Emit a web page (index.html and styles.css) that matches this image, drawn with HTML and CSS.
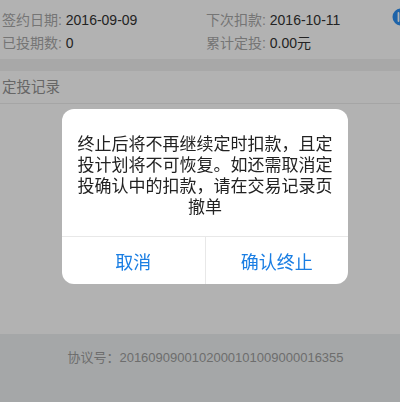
FILE: index.html
```html
<!DOCTYPE html>
<html>
<head>
  <meta charset="utf-8">
  <title>定投详情</title>
  <link rel="stylesheet" href="styles.css">
</head>
<body>
  <div class="page">
    <div class="info">
      <div class="info-row">
        <span class="cell"><span class="label">签约日期: </span><span class="value">2016-09-09</span></span>
        <span class="cell"><span class="label">下次扣款: </span><span class="value">2016-10-11</span></span>
        <svg class="help-icon" width="18" height="18" viewBox="0 0 18 18">
          <circle cx="9" cy="9" r="8.5" fill="#2a8ff2"/>
          <rect x="5.6" y="4" width="1.8" height="10" rx="0.9" fill="#fff"/>
        </svg>
      </div>
      <div class="info-row">
        <span class="cell"><span class="label">已投期数: </span><span class="value">0</span></span>
        <span class="cell"><span class="label">累计定投: </span><span class="value">0.00元</span></span>
      </div>
    </div>
    <div class="gap"></div>
    <div class="section-title">定投记录</div>
    <div class="records"></div>
    <div class="footer">协议号：2016090900102000101009000016355</div>
  </div>

  <div class="mask">
    <div class="dialog">
      <div class="dialog-text">终止后将不再继续定时扣款，且定投计划将不可恢复。如还需取消定投确认中的扣款，请在交易记录页撤单</div>
      <div class="dialog-buttons">
        <button class="btn">取消</button>
        <button class="btn">确认终止</button>
      </div>
    </div>
  </div>
</body>
</html>
```

FILE: styles.css
```css
html, body {
  margin: 0;
  height: 100%;
  overflow: hidden;
}
body {
  background-color: #fff;
  font-family: "Liberation Sans", "Noto Sans CJK SC", sans-serif;
}
.page {
  display: flex;
  flex-direction: column;
  height: 100%;
}
.info {
  padding: 7px 0 6px 2px;
}
.info-row {
  display: flex;
  align-items: center;
  height: 23px;
  font-size: 14px;
}
.cell {
  flex: none;
  width: 204px;
  white-space: nowrap;
}
.cell + .cell {
  width: 186px;
}
.label {
  color: #a8a8a8;
}
.value {
  color: #333;
}
.help-icon {
  flex: none;
  margin-top: -3px;
}
.gap {
  height: 12px;
  background-color: #f1f1f1;
}
.section-title {
  height: 32px;
  line-height: 32px;
  padding-left: 2px;
  font-size: 14.5px;
  color: #929292;
  border-bottom: 1px solid #ececec;
}
.records {
  height: 230px;
}
.footer {
  flex: 1;
  padding: 15px 0 0 11px;
  line-height: 18px;
  text-align: center;
  font-size: 13px;
  color: #9d9d9d;
  background-color: #ecf0f1;
}
.mask {
  position: fixed;
  top: 0;
  left: 0;
  right: 0;
  bottom: 0;
  background-color: rgba(0, 0, 0, 0.3);
  padding: 109px 0 0 62px;
}
.dialog {
  width: 286px;
  background-color: #fff;
  border-radius: 12px;
  overflow: hidden;
}
.dialog-text {
  padding: 23px 14px 20px;
  font-size: 17px;
  line-height: 21px;
  color: #222;
  text-align: center;
  font-family: "Noto Sans CJK SC", sans-serif;
}
.dialog-buttons {
  display: flex;
  height: 47px;
  border-top: 1px solid #e8e8e8;
}
.btn {
  flex: 1;
  border: none;
  background: none;
  font-family: "Noto Sans CJK SC", sans-serif;
  font-size: 18px;
  color: #1a7ee3;
  padding: 0;
}
.btn + .btn {
  border-left: 1px solid #e8e8e8;
}
```
